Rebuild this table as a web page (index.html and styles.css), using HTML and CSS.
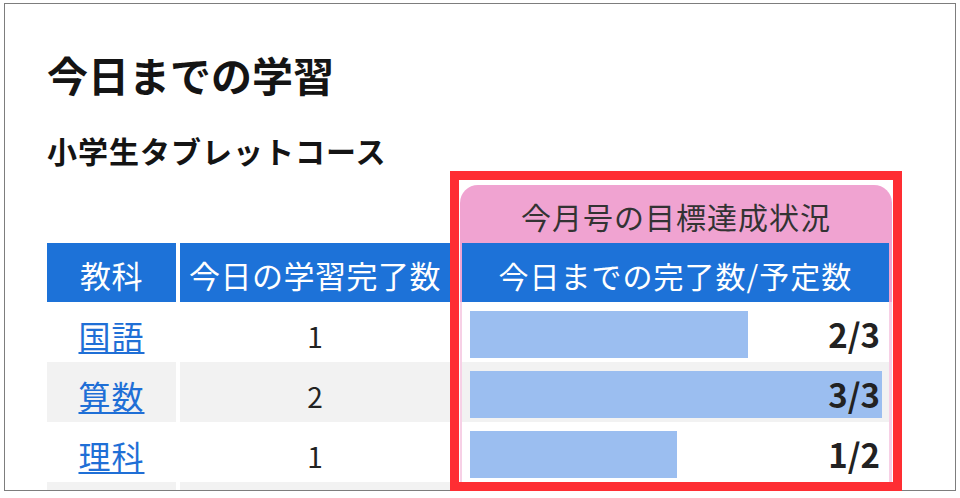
FILE: index.html
```html
<!DOCTYPE html>
<html lang="ja">
<head>
<meta charset="utf-8">
<title>今日までの学習</title>
<link rel="stylesheet" href="styles.css">
</head>
<body>
<div class="frame">
  <div class="clip">
    <h1 class="title">今日までの学習</h1>
    <h2 class="course">小学生タブレットコース</h2>
    <div class="board">
      <div class="spacer"></div>
      <div class="goal-head">今月号の目標達成状況</div>

      <div class="th c1">教科</div>
      <div class="th c2">今日の学習完了数</div>
      <div class="th c3">今日までの完了数/予定数</div>

      <div class="td c1"><a href="#" class="subj">国語</a></div>
      <div class="td c2 num">1</div>
      <div class="td c3 prog"><div class="track"><div class="bar" style="width:67.5%"></div><span class="val">2/3</span></div></div>

      <div class="td c1 alt"><a href="#" class="subj">算数</a></div>
      <div class="td c2 num alt">2</div>
      <div class="td c3 prog alt"><div class="track"><div class="bar" style="width:100%"></div><span class="val">3/3</span></div></div>

      <div class="td c1"><a href="#" class="subj">理科</a></div>
      <div class="td c2 num">1</div>
      <div class="td c3 prog"><div class="track"><div class="bar" style="width:50.2%"></div><span class="val">1/2</span></div></div>

      <div class="td c1 alt"></div>
      <div class="td c2 alt"></div>
      <div class="td c3 prog alt"></div>
    </div>
  </div>
  <div class="focus"></div>
</div>
</body>
</html>
```

FILE: styles.css
```css
html, body {
  margin: 0;
  padding: 0;
  background: #ffffff;
}

body {
  font-family: "Noto Sans CJK JP", "Noto Sans", sans-serif;
  color: #1a1a1a;
}

.frame {
  position: relative;
  margin: 3px 0 0 4px;
  width: 950px;
  height: 486px;
  border: 1px solid #7d7d7d;
}

.clip {
  height: 100%;
  overflow: hidden;
  padding: 50px 0 0 42px;
  box-sizing: border-box;
}

.title {
  margin: 0;
  font-size: 41px;
  line-height: 1;
  font-weight: 700;
  color: #141414;
}

.course {
  margin: 40px 0 0 0;
  font-size: 30px;
  line-height: 1;
  font-weight: 700;
  letter-spacing: 1px;
  color: #141414;
}

.board {
  margin-top: 20px;
  display: grid;
  grid-template-columns: 133px 280px 432px;
  grid-template-rows: 58px 59px 60px 60px 60px 60px;
}

.spacer {
  grid-column: 1 / span 2;
}

.goal-head {
  grid-column: 3;
  background: #f0a3d1;
  border-radius: 18px 18px 0 0;
  display: flex;
  align-items: center;
  justify-content: center;
  font-size: 30px;
  line-height: 1;
  letter-spacing: 1px;
  color: #333333;
  padding-top: 3px;
  box-sizing: border-box;
}

.c1 { grid-column: 1; margin-right: 4px; }
.c2 { grid-column: 2; margin-right: 10px; }
.c3 { grid-column: 3; }

.th {
  background: #1d72d8;
  color: #ffffff;
  display: flex;
  align-items: center;
  justify-content: center;
  font-size: 31px;
  line-height: 1;
  letter-spacing: 0.5px;
  padding-top: 4px;
  box-sizing: border-box;
}

.th.c3 {
  border-left: 2px solid #f0a3d1;
  border-right: 3px solid #f0a3d1;
  font-size: 30px;
  letter-spacing: 1px;
}

.td {
  background: #ffffff;
  display: flex;
  align-items: center;
  justify-content: center;
  box-sizing: border-box;
}

.td.alt {
  background: #f2f2f2;
}

.c1.td {
  padding-top: 6px;
}

.subj {
  color: #1f6fd6;
  font-size: 32px;
  line-height: 1;
  letter-spacing: 1px;
  text-decoration: underline;
  text-decoration-thickness: 2px;
  text-underline-offset: 3px;
}

.num {
  font-size: 28px;
  line-height: 1;
  color: #222222;
  padding-top: 8px;
}

.prog {
  border-left: 2px solid #f7d0e6;
  border-right: 3px solid #f7d0e6;
  padding: 9px 7px 4px 8px;
  display: block;
}

.track {
  display: grid;
  height: 47px;
}

.bar {
  grid-area: 1 / 1;
  height: 47px;
  background: #9bbef0;
}

.val {
  grid-area: 1 / 1;
  justify-self: end;
  align-self: center;
  margin-right: 2px;
  font-size: 33px;
  line-height: 1;
  font-weight: 700;
  color: #222222;
}

.focus {
  position: absolute;
  left: 445px;
  top: 167px;
  width: 452px;
  height: 320px;
  border: 9px solid #fe2e33;
  box-sizing: border-box;
}
```
